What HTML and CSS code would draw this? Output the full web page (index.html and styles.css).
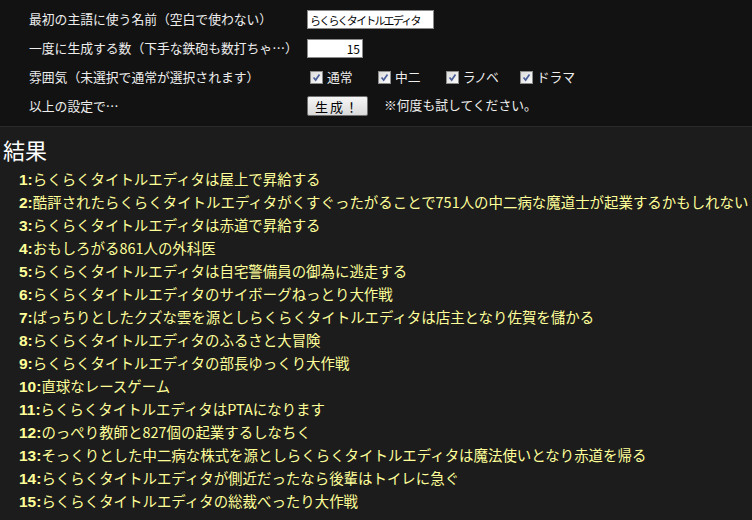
FILE: index.html
```html
<!DOCTYPE html>
<html lang="ja">

<head>
    <meta charset="UTF-8">
    <title>らくらくタイトルエディタ</title>
    <link rel="stylesheet" href="styles.css">
</head>

<body>
    <div id="setting">
        <table class="form">
            <tr>
                <td class="label">最初の主語に使う名前（空白で使わない）</td>
                <td><input class="name" type="text" value="らくらくタイトルエディタ"></td>
            </tr>
            <tr>
                <td class="label">一度に生成する数（下手な鉄砲も数打ちゃ…）</td>
                <td><input class="num" type="text" value="15"></td>
            </tr>
            <tr>
                <td class="label">雰囲気（未選択で通常が選択されます）</td>
                <td class="checks">
                    <label><span class="box"><svg viewBox="0 0 13 13"><path d="M3 6.5 L5.5 9.5 L10 3" /></svg></span>通常</label>
                    <label><span class="box"><svg viewBox="0 0 13 13"><path d="M3 6.5 L5.5 9.5 L10 3" /></svg></span>中二</label>
                    <label class="wide"><span class="box"><svg viewBox="0 0 13 13"><path d="M3 6.5 L5.5 9.5 L10 3" /></svg></span>ラノベ</label>
                    <label><span class="box"><svg viewBox="0 0 13 13"><path d="M3 6.5 L5.5 9.5 L10 3" /></svg></span>ドラマ</label>
                </td>
            </tr>
            <tr>
                <td class="label">以上の設定で…</td>
                <td><input class="go" type="button" value="生成！"><span class="note">※何度も試してください。</span></td>
            </tr>
        </table>
    </div>

    <div id="result">
        <h2>結果</h2>
        <ul id="list">
            <li><b>1:</b>らくらくタイトルエディタは屋上で昇給する</li>
            <li><b>2:</b>酷評されたらくらくタイトルエディタがくすぐったがることで751人の中二病な魔道士が起業するかもしれない</li>
            <li><b>3:</b>らくらくタイトルエディタは赤道で昇給する</li>
            <li><b>4:</b>おもしろがる861人の外科医</li>
            <li><b>5:</b>らくらくタイトルエディタは自宅警備員の御為に逃走する</li>
            <li><b>6:</b>らくらくタイトルエディタのサイボーグねっとり大作戦</li>
            <li><b>7:</b>ばっちりとしたクズな雲を源としらくらくタイトルエディタは店主となり佐賀を儲かる</li>
            <li><b>8:</b>らくらくタイトルエディタのふるさと大冒険</li>
            <li><b>9:</b>らくらくタイトルエディタの部長ゆっくり大作戦</li>
            <li><b>10:</b>直球なレースゲーム</li>
            <li><b>11:</b>らくらくタイトルエディタはPTAになります</li>
            <li><b>12:</b>のっぺり教師と827個の起業するしなちく</li>
            <li><b>13:</b>そっくりとした中二病な株式を源としらくらくタイトルエディタは魔法使いとなり赤道を帰る</li>
            <li><b>14:</b>らくらくタイトルエディタが側近だったなら後輩はトイレに急ぐ</li>
            <li><b>15:</b>らくらくタイトルエディタの総裁べったり大作戦</li>
        </ul>
    </div>
</body>

</html>
```

FILE: styles.css
```css
html,
body {
    margin: 0;
    padding: 0;
    background-color: #1c1c1c;
    font-family: "Noto Sans CJK JP", "Liberation Sans", sans-serif;
    overflow: hidden;
}

#setting {
    height: 127px;
    box-sizing: border-box;
    background-color: #121212;
    padding: 4px 0 0 29px;
    border-bottom: 1px solid #2a2a2a;
}

.form {
    border-collapse: collapse;
}

.form td {
    height: 29px;
    padding: 0;
    color: #eee;
    font-size: 12.8px;
    vertical-align: middle;
    white-space: nowrap;
}

.form .label {
    width: 278px;
}

.form input[type=text] {
    box-sizing: border-box;
    height: 19px;
    margin: 0;
    padding: 0 2px;
    border: 1px solid #8a8a8a;
    background-color: #fff;
    color: #000;
    font-family: "Noto Sans CJK JP", sans-serif;
    font-size: 11px;
    vertical-align: middle;
}

.name {
    width: 127px;
    letter-spacing: -1.8px;
}

.num {
    width: 56px;
    text-align: right;
    font-size: 12px !important;
}

.checks label {
    display: inline-block;
    width: 65px;
    font-size: 12.8px;
}

.checks .wide {
    width: 71px;
    letter-spacing: -1px;
}

.checks .box {
    display: inline-block;
    box-sizing: border-box;
    width: 13px;
    height: 13px;
    margin: 0 4px 0 3px;
    border: 1px solid #8c8c8c;
    background: linear-gradient(135deg, #dcdcdc, #fafafa);
    vertical-align: -2px;
}

.checks svg {
    display: block;
    width: 11px;
    height: 11px;
    fill: none;
    stroke: #4a5f9a;
    stroke-width: 2;
}

.go {
    width: 61px;
    height: 20px;
    margin: 0;
    padding: 0;
    border: 1px solid #707070;
    border-radius: 2px;
    background: linear-gradient(#f6f6f6, #dadada);
    color: #000;
    font-family: "Noto Sans CJK JP", sans-serif;
    font-size: 13px;
    letter-spacing: 2px;
    vertical-align: middle;
}

.note {
    margin-left: 16px;
}

#result {
    padding: 5px 0 0 3px;
}

#result h2 {
    margin: 0 0 1px 0;
    color: #fff;
    font-size: 22px;
    font-weight: normal;
    line-height: 34px;
}

#list {
    margin: 0;
    padding: 0 0 0 16px;
    list-style: none;
}

#list li {
    height: 23px;
    line-height: 23px;
    color: #ffff99;
    font-size: 14.45px;
    white-space: nowrap;
}

#list b {
    font-family: "Liberation Sans", sans-serif;
    font-size: 15.5px;
}
```
